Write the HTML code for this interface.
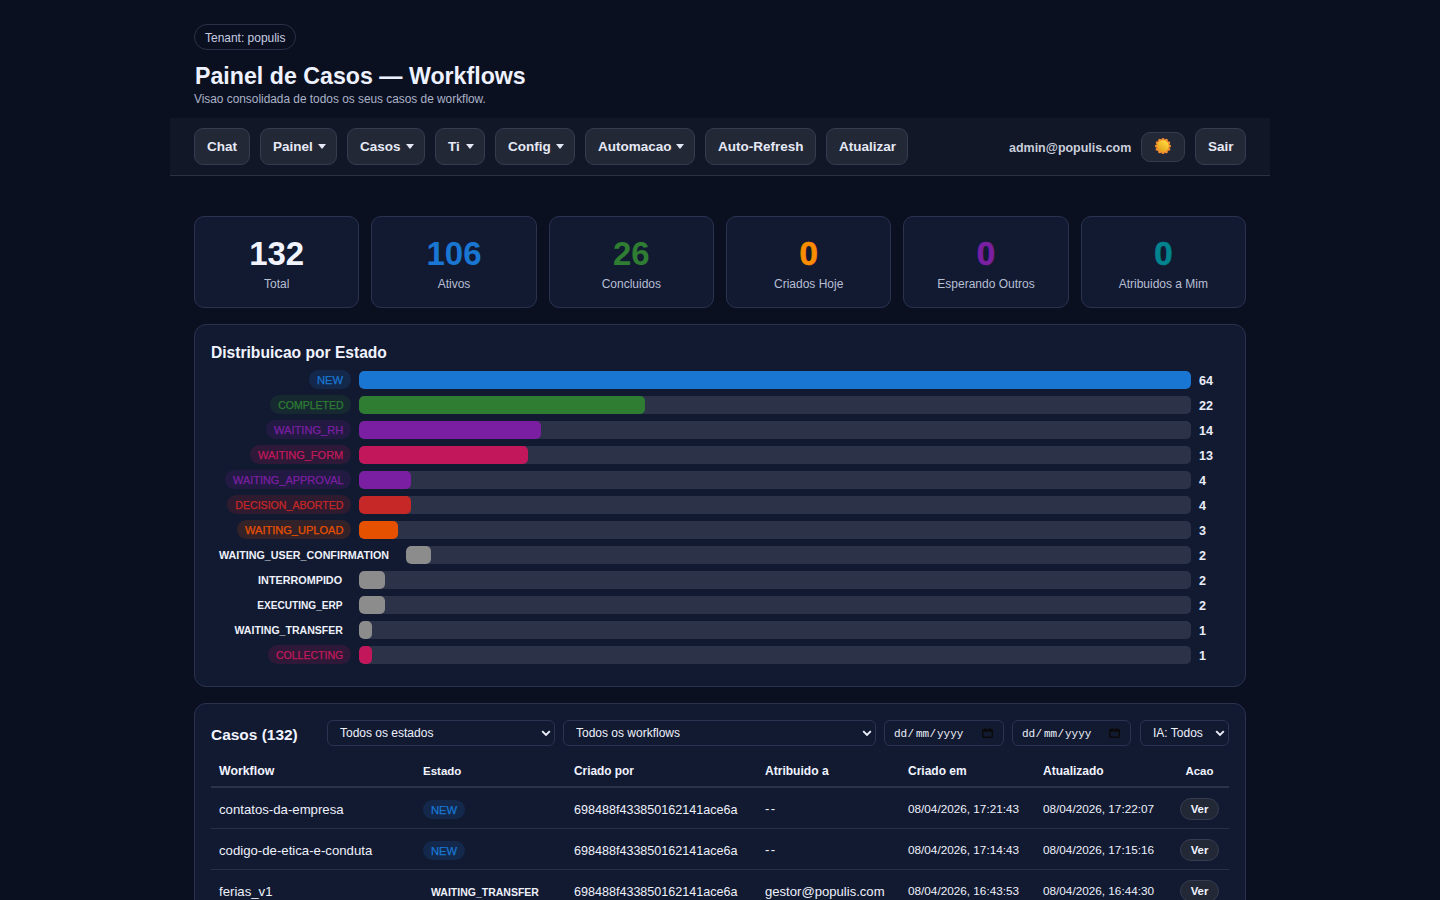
<!DOCTYPE html>
<html><head><meta charset="utf-8">
<style>
*{box-sizing:border-box}
html,body{margin:0;padding:0}
body{background:#0b1020;color:#e6eaf5;font-family:"Liberation Sans",sans-serif;width:1440px;height:900px;overflow:hidden;position:relative}
.a{position:absolute;white-space:nowrap}
.tenant{left:194px;top:24px;height:26px;width:102px;border:1px solid #2a3146;border-radius:13px}
.nav{left:170px;top:118px;width:1100px;height:58px;background:#111726;border-bottom:1px solid #2a3145}
.btn{top:128px;height:37px;background:#232837;border:1px solid #363c4f;border-radius:9px}
.bt{font-weight:700;font-size:13.5px;color:#e6e9f5;line-height:16px}
.caret{width:0;height:0;border-left:4px solid transparent;border-right:4px solid transparent;border-top:5px solid #e6e9f5}
.card{top:216px;width:165.33px;height:92px;background:#121a32;border:1px solid #2a3250;border-radius:10px}
.cn{font-size:33px;font-weight:700;line-height:36px;text-align:center;width:165.33px}
.cl{font-size:12px;color:#b8bfd3;line-height:14px;text-align:center;width:165.33px}
.panel{left:194px;width:1052px;background:#121a32;border:1px solid #2a3250;border-radius:12px}
.pill{height:19px;line-height:19px;padding:0 8px;border-radius:10px;font-size:10.7px}
.pt{line-height:13px;-webkit-text-stroke:0.25px currentColor}
.plain{color:#eef1fa;font-weight:700;font-size:10.75px;-webkit-text-stroke:0}
.track{height:18px;background:#2c3349;border-radius:5px;overflow:hidden}
.fill{position:absolute;left:0;top:0;bottom:0;border-radius:5px}
.cnt{font-size:12.6px;font-weight:700;color:#e8ecf8;line-height:14px}
.sel{top:720px;height:26px;border:1px solid #2b3350;border-radius:6px;background:#121a32}
.st{color:#eef1fa;font-size:12px;line-height:14px}
.dt{font-family:"Liberation Mono",monospace;font-size:11px;color:#eef1fa;line-height:13px}
.th{font-size:12.3px;font-weight:700;color:#f1f4ff;line-height:14px}
.td{font-size:13px;color:#eef1fa;line-height:15px}
.ver{width:39px;height:22px;border:1px solid #363c4f;background:#232837;border-radius:11px}
.vt{color:#f1f4ff;font-size:11.4px;font-weight:700;line-height:13px;width:39px;text-align:center}
</style></head>
<body>
<div class="a tenant" style="left:194px;top:24px;"></div>
<div class="a " style="left:205px;top:31px;font-size:11.98px;color:#c7cde0;line-height:14px">Tenant: populis</div>
<div class="a " style="left:195px;top:62px;font-size:23.2px;font-weight:700;color:#eef2ff;line-height:28px">Painel de Casos — Workflows</div>
<div class="a " style="left:194px;top:91.7px;font-size:11.87px;color:#aab2c8;line-height:14px">Visao consolidada de todos os seus casos de workflow.</div>
<div class="a nav" style=""></div>
<div class="a btn" style="left:194px;top:128px;width:56px"></div>
<div class="a bt" style="left:207px;top:139px;">Chat</div>
<div class="a btn" style="left:260px;top:128px;width:77px"></div>
<div class="a bt" style="left:273px;top:139px;">Painel</div>
<div class="a caret" style="left:318px;top:144px;"></div>
<div class="a btn" style="left:347px;top:128px;width:78px"></div>
<div class="a bt" style="left:360px;top:139px;">Casos</div>
<div class="a caret" style="left:406px;top:144px;"></div>
<div class="a btn" style="left:435px;top:128px;width:50px"></div>
<div class="a bt" style="left:448px;top:139px;">Ti</div>
<div class="a caret" style="left:466px;top:144px;"></div>
<div class="a btn" style="left:495px;top:128px;width:80px"></div>
<div class="a bt" style="left:508px;top:139px;">Config</div>
<div class="a caret" style="left:556px;top:144px;"></div>
<div class="a btn" style="left:585px;top:128px;width:110px"></div>
<div class="a bt" style="left:598px;top:139px;">Automacao</div>
<div class="a caret" style="left:676px;top:144px;"></div>
<div class="a btn" style="left:705px;top:128px;width:111px"></div>
<div class="a bt" style="left:718px;top:139px;">Auto-Refresh</div>
<div class="a btn" style="left:826px;top:128px;width:82px"></div>
<div class="a bt" style="left:839px;top:139px;">Atualizar</div>
<div class="a " style="left:1009px;top:140.5px;font-weight:700;font-size:12.48px;color:#c9cedc;line-height:14px">admin@populis.com</div>
<div class="a btn" style="left:1141px;top:132px;width:44px;height:30px;top:132px"></div>
<div class="a " style="left:1153.8px;top:137.3px;line-height:0"><svg width="18" height="18" viewBox="0 0 18 18"><defs><linearGradient id="sg" x1="0.8" y1="0.1" x2="0.2" y2="0.9"><stop offset="0" stop-color="#ffd93d"/><stop offset="1" stop-color="#e2a21f"/></linearGradient></defs><g fill="#f7902f"><circle cx="9.00" cy="2.50" r="1.6"/><circle cx="12.25" cy="3.37" r="1.6"/><circle cx="14.63" cy="5.75" r="1.6"/><circle cx="15.50" cy="9.00" r="1.6"/><circle cx="14.63" cy="12.25" r="1.6"/><circle cx="12.25" cy="14.63" r="1.6"/><circle cx="9.00" cy="15.50" r="1.6"/><circle cx="5.75" cy="14.63" r="1.6"/><circle cx="3.37" cy="12.25" r="1.6"/><circle cx="2.50" cy="9.00" r="1.6"/><circle cx="3.37" cy="5.75" r="1.6"/><circle cx="5.75" cy="3.37" r="1.6"/><circle cx="9" cy="9" r="6.6"/></g><circle cx="9" cy="9" r="5.7" fill="url(#sg)"/></svg></div>
<div class="a btn" style="left:1195px;top:128px;width:51px"></div>
<div class="a bt" style="left:1208px;top:139px;">Sair</div>
<div class="a card" style="left:194.0px;top:216px;"></div>
<div class="a cn" style="left:194.0px;top:236px;color:#f1f4ff">132</div>
<div class="a cl" style="left:194.0px;top:277px;">Total</div>
<div class="a card" style="left:371.33px;top:216px;"></div>
<div class="a cn" style="left:371.33px;top:236px;color:#1976d2">106</div>
<div class="a cl" style="left:371.33px;top:277px;">Ativos</div>
<div class="a card" style="left:548.67px;top:216px;"></div>
<div class="a cn" style="left:548.67px;top:236px;color:#2e7d32">26</div>
<div class="a cl" style="left:548.67px;top:277px;">Concluidos</div>
<div class="a card" style="left:726.0px;top:216px;"></div>
<div class="a cn" style="left:726.0px;top:236px;color:#fb8c00;-webkit-text-stroke:0.7px #fb8c00">0</div>
<div class="a cl" style="left:726.0px;top:277px;">Criados Hoje</div>
<div class="a card" style="left:903.33px;top:216px;"></div>
<div class="a cn" style="left:903.33px;top:236px;color:#7b1fa2;-webkit-text-stroke:0.7px #7b1fa2">0</div>
<div class="a cl" style="left:903.33px;top:277px;">Esperando Outros</div>
<div class="a card" style="left:1080.66px;top:216px;"></div>
<div class="a cn" style="left:1080.66px;top:236px;color:#00838f;-webkit-text-stroke:0.7px #00838f">0</div>
<div class="a cl" style="left:1080.66px;top:277px;">Atribuidos a Mim</div>
<div class="a panel" style="left:194px;top:324px;height:363px"></div>
<div class="a " style="left:211px;top:343.5px;font-size:15.6px;font-weight:700;color:#f1f4ff;line-height:18px">Distribuicao por Estado</div>
<div class="a " style="left:309.0px;top:369.5px;width:42.0px;height:19px;border-radius:10px;background:rgba(25,118,210,0.16)"></div>
<div class="a pt" style="left:317.0px;top:373.5px;font-size:11.2px;color:#1976d2">NEW</div>
<div class="a track" style="left:359px;top:371px;width:832px"><div class="fill" style="width:832.00px;background:#1976d2"></div></div>
<div class="a cnt" style="left:1199px;top:374px;">64</div>
<div class="a " style="left:270.2px;top:394.5px;width:80.8px;height:19px;border-radius:10px;background:rgba(46,125,50,0.16)"></div>
<div class="a pt" style="left:278.2px;top:398.5px;font-size:10.5px;color:#2e7d32">COMPLETED</div>
<div class="a track" style="left:359px;top:396px;width:832px"><div class="fill" style="width:286.00px;background:#2e7d32"></div></div>
<div class="a cnt" style="left:1199px;top:399px;">22</div>
<div class="a " style="left:266.0px;top:419.5px;width:85.0px;height:19px;border-radius:10px;background:rgba(123,31,162,0.16)"></div>
<div class="a pt" style="left:274.0px;top:423.5px;font-size:11.1px;color:#7b1fa2">WAITING_RH</div>
<div class="a track" style="left:359px;top:421px;width:832px"><div class="fill" style="width:182.00px;background:#7b1fa2"></div></div>
<div class="a cnt" style="left:1199px;top:424px;">14</div>
<div class="a " style="left:250.1px;top:444.5px;width:100.9px;height:19px;border-radius:10px;background:rgba(194,24,91,0.16)"></div>
<div class="a pt" style="left:258.1px;top:448.5px;font-size:11.0px;color:#c2185b">WAITING_FORM</div>
<div class="a track" style="left:359px;top:446px;width:832px"><div class="fill" style="width:169.00px;background:#c2185b"></div></div>
<div class="a cnt" style="left:1199px;top:449px;">13</div>
<div class="a " style="left:225.0px;top:469.5px;width:126.0px;height:19px;border-radius:10px;background:rgba(123,31,162,0.16)"></div>
<div class="a pt" style="left:233.0px;top:473.5px;font-size:10.95px;color:#7b1fa2">WAITING_APPROVAL</div>
<div class="a track" style="left:359px;top:471px;width:832px"><div class="fill" style="width:52.00px;background:#7b1fa2"></div></div>
<div class="a cnt" style="left:1199px;top:474px;">4</div>
<div class="a " style="left:227.3px;top:494.5px;width:123.7px;height:19px;border-radius:10px;background:rgba(198,40,40,0.16)"></div>
<div class="a pt" style="left:235.3px;top:498.5px;font-size:10.6px;color:#c62828">DECISION_ABORTED</div>
<div class="a track" style="left:359px;top:496px;width:832px"><div class="fill" style="width:52.00px;background:#c62828"></div></div>
<div class="a cnt" style="left:1199px;top:499px;">4</div>
<div class="a " style="left:237.0px;top:519.5px;width:114.0px;height:19px;border-radius:10px;background:rgba(230,81,0,0.16)"></div>
<div class="a pt" style="left:245.0px;top:523.5px;font-size:11.05px;color:#e65100">WAITING_UPLOAD</div>
<div class="a track" style="left:359px;top:521px;width:832px"><div class="fill" style="width:39.00px;background:#e65100"></div></div>
<div class="a cnt" style="left:1199px;top:524px;">3</div>
<div class="a pt plain" style="left:219.0px;top:548.5px;font-size:10.72px">WAITING_USER_CONFIRMATION</div>
<div class="a track" style="left:406px;top:546px;width:785px"><div class="fill" style="width:24.53px;background:#8c8c8c"></div></div>
<div class="a cnt" style="left:1199px;top:549px;">2</div>
<div class="a pt plain" style="left:258.1px;top:573.5px;font-size:10.8px">INTERROMPIDO</div>
<div class="a track" style="left:359px;top:571px;width:832px"><div class="fill" style="width:26.00px;background:#8c8c8c"></div></div>
<div class="a cnt" style="left:1199px;top:574px;">2</div>
<div class="a pt plain" style="left:257.3px;top:598.5px;font-size:10.1px">EXECUTING_ERP</div>
<div class="a track" style="left:359px;top:596px;width:832px"><div class="fill" style="width:26.00px;background:#8c8c8c"></div></div>
<div class="a cnt" style="left:1199px;top:599px;">2</div>
<div class="a pt plain" style="left:234.5px;top:623.5px;font-size:10.55px">WAITING_TRANSFER</div>
<div class="a track" style="left:359px;top:621px;width:832px"><div class="fill" style="width:13.00px;background:#8c8c8c"></div></div>
<div class="a cnt" style="left:1199px;top:624px;">1</div>
<div class="a " style="left:267.9px;top:644.5px;width:83.1px;height:19px;border-radius:10px;background:rgba(194,24,91,0.16)"></div>
<div class="a pt" style="left:275.9px;top:648.5px;font-size:10.55px;color:#c2185b">COLLECTING</div>
<div class="a track" style="left:359px;top:646px;width:832px"><div class="fill" style="width:13.00px;background:#c2185b"></div></div>
<div class="a cnt" style="left:1199px;top:649px;">1</div>
<div class="a panel" style="left:194px;top:703px;height:260px"></div>
<div class="a " style="left:211px;top:726px;font-size:15.46px;font-weight:700;color:#f1f4ff;line-height:18px">Casos (132)</div>
<div class="a sel" style="left:327px;top:720px;width:228px"></div>
<div class="a st" style="left:340px;top:726px;">Todos os estados</div>
<div class="a " style="left:541px;top:730px;line-height:0"><svg width="10" height="7" viewBox="0 0 10 7"><path d="M1.2 1.2 L5 5 L8.8 1.2" stroke="#eef1fa" stroke-width="1.9" fill="none"/></svg></div>
<div class="a sel" style="left:563px;top:720px;width:313px"></div>
<div class="a st" style="left:576px;top:726px;">Todos os workflows</div>
<div class="a " style="left:862px;top:730px;line-height:0"><svg width="10" height="7" viewBox="0 0 10 7"><path d="M1.2 1.2 L5 5 L8.8 1.2" stroke="#eef1fa" stroke-width="1.9" fill="none"/></svg></div>
<div class="a sel" style="left:1140px;top:720px;width:89px"></div>
<div class="a st" style="left:1153px;top:726px;">IA: Todos</div>
<div class="a " style="left:1215px;top:730px;line-height:0"><svg width="10" height="7" viewBox="0 0 10 7"><path d="M1.2 1.2 L5 5 L8.8 1.2" stroke="#eef1fa" stroke-width="1.9" fill="none"/></svg></div>
<div class="a sel" style="left:884px;top:720px;width:120px"></div>
<div class="a dt" style="left:894px;top:727.5px;">dd</div>
<div class="a dt" style="left:907.5px;top:727.5px;">/</div>
<div class="a dt" style="left:916px;top:727.5px;">mm</div>
<div class="a dt" style="left:929.5px;top:727.5px;">/</div>
<div class="a dt" style="left:937px;top:727.5px;">yyyy</div>
<div class="a " style="left:982px;top:728px;line-height:0"><svg width="11" height="10" viewBox="0 0 11 10"><rect x="0.75" y="1.75" width="9.5" height="7.5" rx="1" fill="none" stroke="#0a0a0a" stroke-width="1.5"/><rect x="0.5" y="1.5" width="10" height="2.2" fill="#0a0a0a"/><rect x="2.5" y="0" width="1.4" height="2" fill="#0a0a0a"/><rect x="7.1" y="0" width="1.4" height="2" fill="#0a0a0a"/></svg></div>
<div class="a sel" style="left:1012px;top:720px;width:119px"></div>
<div class="a dt" style="left:1022px;top:727.5px;">dd</div>
<div class="a dt" style="left:1035.5px;top:727.5px;">/</div>
<div class="a dt" style="left:1044px;top:727.5px;">mm</div>
<div class="a dt" style="left:1057.5px;top:727.5px;">/</div>
<div class="a dt" style="left:1065px;top:727.5px;">yyyy</div>
<div class="a " style="left:1109px;top:728px;line-height:0"><svg width="11" height="10" viewBox="0 0 11 10"><rect x="0.75" y="1.75" width="9.5" height="7.5" rx="1" fill="none" stroke="#0a0a0a" stroke-width="1.5"/><rect x="0.5" y="1.5" width="10" height="2.2" fill="#0a0a0a"/><rect x="2.5" y="0" width="1.4" height="2" fill="#0a0a0a"/><rect x="7.1" y="0" width="1.4" height="2" fill="#0a0a0a"/></svg></div>
<div class="a th" style="left:219px;top:764px;font-size:12.33px">Workflow</div>
<div class="a th" style="left:423px;top:764px;font-size:11.5px">Estado</div>
<div class="a th" style="left:574px;top:764px;font-size:11.86px">Criado por</div>
<div class="a th" style="left:765px;top:764px;font-size:12.05px">Atribuido a</div>
<div class="a th" style="left:908px;top:764px;font-size:12.0px">Criado em</div>
<div class="a th" style="left:1043px;top:764px;font-size:12.0px">Atualizado</div>
<div class="a th" style="left:1185.5px;top:764px;font-size:11.45px">Acao</div>
<div class="a " style="left:211px;top:786px;width:1018px;height:2px;background:#2c3349"></div>
<div class="a td" style="left:219px;top:802.0px;font-size:13.2px">contatos-da-empresa</div>
<div class="a pill" style="left:423px;top:800.0px;font-size:11.2px;color:#1976d2;background:rgba(25,118,210,0.16);-webkit-text-stroke:0.25px #1976d2;line-height:20.5px">NEW</div>
<div class="a td" style="left:574px;top:802.5px;font-size:12.57px">698488f433850162141ace6a</div>
<div class="a td" style="left:765px;top:801.0px;font-size:13.1px;letter-spacing:1.5px">--</div>
<div class="a td" style="left:908px;top:800.5px;font-size:11.76px">08/04/2026, 17:21:43</div>
<div class="a td" style="left:1043px;top:800.5px;font-size:11.76px">08/04/2026, 17:22:07</div>
<div class="a ver" style="left:1180px;top:797.5px;"></div>
<div class="a vt" style="left:1180px;top:802.5px;">Ver</div>
<div class="a " style="left:211px;top:828px;width:1018px;height:1px;background:#283048"></div>
<div class="a td" style="left:219px;top:843.0px;font-size:13.2px">codigo-de-etica-e-conduta</div>
<div class="a pill" style="left:423px;top:841.0px;font-size:11.2px;color:#1976d2;background:rgba(25,118,210,0.16);-webkit-text-stroke:0.25px #1976d2;line-height:20.5px">NEW</div>
<div class="a td" style="left:574px;top:843.5px;font-size:12.57px">698488f433850162141ace6a</div>
<div class="a td" style="left:765px;top:842.0px;font-size:13.1px;letter-spacing:1.5px">--</div>
<div class="a td" style="left:908px;top:841.5px;font-size:11.76px">08/04/2026, 17:14:43</div>
<div class="a td" style="left:1043px;top:841.5px;font-size:11.76px">08/04/2026, 17:15:16</div>
<div class="a ver" style="left:1180px;top:838.5px;"></div>
<div class="a vt" style="left:1180px;top:843.5px;">Ver</div>
<div class="a " style="left:211px;top:869px;width:1018px;height:1px;background:#283048"></div>
<div class="a td" style="left:219px;top:884.0px;font-size:13.2px">ferias_v1</div>
<div class="a pill plain" style="left:423px;top:882.5px;font-size:10.5px">WAITING_TRANSFER</div>
<div class="a td" style="left:574px;top:884.5px;font-size:12.57px">698488f433850162141ace6a</div>
<div class="a td" style="left:765px;top:884.0px;font-size:13.1px">gestor@populis.com</div>
<div class="a td" style="left:908px;top:882.5px;font-size:11.76px">08/04/2026, 16:43:53</div>
<div class="a td" style="left:1043px;top:882.5px;font-size:11.76px">08/04/2026, 16:44:30</div>
<div class="a ver" style="left:1180px;top:879.5px;"></div>
<div class="a vt" style="left:1180px;top:884.5px;">Ver</div>
<div class="a " style="left:211px;top:910px;width:1018px;height:1px;background:#283048"></div>
<div class="a td" style="left:219px;top:925.0px;font-size:13.2px">ferias_v1</div>
<div class="a pill plain" style="left:423px;top:923.5px;font-size:10.5px">WAITING_TRANSFER</div>
<div class="a td" style="left:574px;top:925.5px;font-size:12.57px">698488f433850162141ace6a</div>
<div class="a td" style="left:765px;top:925.0px;font-size:13.1px">gestor@populis.com</div>
<div class="a td" style="left:908px;top:923.5px;font-size:11.76px">08/04/2026, 16:43:53</div>
<div class="a td" style="left:1043px;top:923.5px;font-size:11.76px">08/04/2026, 16:44:30</div>
<div class="a ver" style="left:1180px;top:920.5px;"></div>
<div class="a vt" style="left:1180px;top:925.5px;">Ver</div>
<div class="a " style="left:211px;top:951px;width:1018px;height:1px;background:#283048"></div>
</body></html>
